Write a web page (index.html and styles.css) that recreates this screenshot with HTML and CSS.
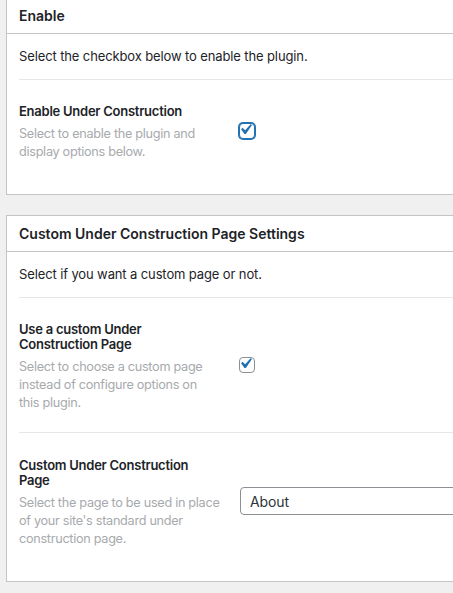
FILE: index.html
```html
<!DOCTYPE html>
<html lang="en">
<head>
<meta charset="utf-8">
<title>Under Construction Settings</title>
<link rel="stylesheet" href="styles.css">
</head>
<body>
<div class="wrap">
  <section class="card">
    <h2 class="card-head">Enable</h2>
    <div class="card-body">
      <p class="intro">Select the checkbox below to enable the plugin.</p>
      <div class="row">
        <div class="label-col">
          <div class="label">Enable Under Construction</div>
          <p class="desc">Select to enable the plugin and display options below.</p>
        </div>
        <div class="field-col">
          <span class="cb cb-focus"><svg viewBox="0 0 20 20" width="21" height="21"><path d="M14.83 4.89l1.34.94-5.81 8.38H9.02L5.78 9.67l1.34-1.25 2.57 2.4z" fill="#2271b1"/></svg></span>
        </div>
      </div>
    </div>
  </section>

  <section class="card">
    <h2 class="card-head">Custom Under Construction Page Settings</h2>
    <div class="card-body">
      <p class="intro">Select if you want a custom page or not.</p>
      <div class="row">
        <div class="label-col">
          <div class="label">Use a custom Under Construction Page</div>
          <p class="desc">Select to choose a custom page instead of configure options on this plugin.</p>
        </div>
        <div class="field-col">
          <span class="cb"><svg viewBox="0 0 20 20" width="21" height="21"><path d="M14.83 4.89l1.34.94-5.81 8.38H9.02L5.78 9.67l1.34-1.25 2.57 2.4z" fill="#2271b1"/></svg></span>
        </div>
      </div>
      <div class="row">
        <div class="label-col">
          <div class="label">Custom Under Construction Page</div>
          <p class="desc">Select the page to be used in place of your site's standard under construction page.</p>
        </div>
        <div class="field-col">
          <div class="select">About</div>
        </div>
      </div>
    </div>
  </section>
</div>
</body>
</html>
```

FILE: styles.css
```css
html, body {
  margin: 0;
  padding: 0;
  background: #f0f0f1;
  overflow: hidden;
}

body {
  font-family: Inter, "Noto Sans", Roboto, sans-serif;
  font-size: 13px;
  letter-spacing: -0.12px;
  color: #1d2327;
}

.wrap {
  display: flex;
  flex-direction: column;
  gap: 20px;
  padding-left: 6px;
  margin-top: -3px;
}

.card {
  background: #fff;
  border: 1px solid #c3c4c7;
  margin-right: -40px;
}

.card-head {
  margin: 0;
  height: 35px;
  display: flex;
  align-items: center;
  padding: 0 12px;
  font-size: 14px;
  font-weight: 600;
  letter-spacing: 0;
  border-bottom: 1px solid #c3c4c7;
}

.card-body {
  padding: 0 12px 13px;
}

.intro {
  margin: 12px 0 13px;
  line-height: 20px;
}

.row {
  display: flex;
  align-items: center;
  border-top: 1px solid #e6e6e6;
  padding: 24px 0 20px;
}

.row + .row {
  padding-top: 25px;
}

.label-col {
  flex: none;
  width: 201px;
  padding-right: 9px;
}

.label {
  font-weight: 600;
  line-height: 15px;
  letter-spacing: -0.25px;
}

.desc {
  margin: 6px 0 0;
  font-size: 12.7px;
  line-height: 18px;
  letter-spacing: -0.3px;
  color: #a7aaad;
}

.field-col {
  flex: 1;
  padding-left: 10px;
  padding-bottom: 4px;
}

.cb {
  display: flex;
  align-items: center;
  justify-content: center;
  width: 16px;
  height: 16px;
  box-sizing: border-box;
  border: 1px solid #8c8f94;
  border-radius: 4px;
  background: #fff;
}

.cb svg {
  flex: none;
  margin: -3px 0 0 -3px;
}

.cb-focus {
  border-color: #2271b1;
  box-shadow: 0 0 0 1px #2271b1;
}

.select {
  margin-left: 1px;
  width: 280px;
  height: 28px;
  box-sizing: border-box;
  border: 1px solid #8c8f94;
  border-radius: 4px;
  padding: 0 9px;
  display: flex;
  align-items: center;
  font-size: 14px;
  color: #2c3338;
}
```
